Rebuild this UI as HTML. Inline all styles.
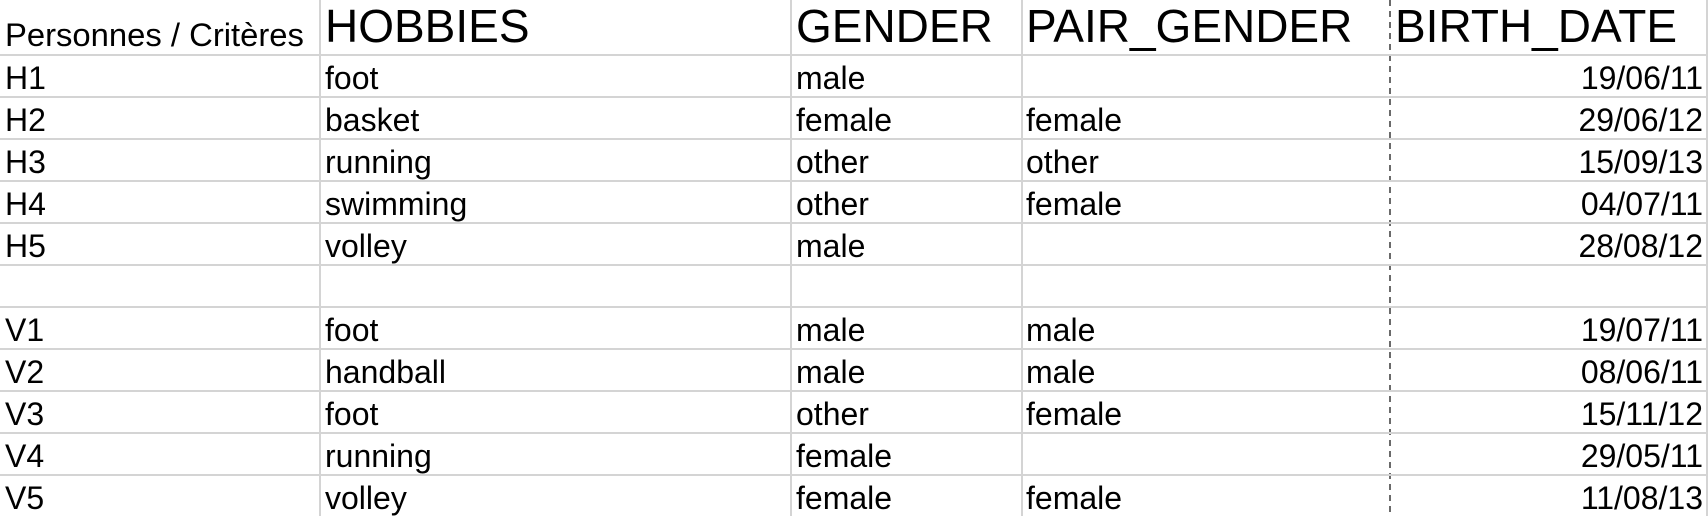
<!DOCTYPE html>
<html><head><meta charset="utf-8"><style>
html,body{margin:0;padding:0;background:#fff;width:1708px;height:516px;overflow:hidden}
body{position:relative;font-family:"Liberation Sans",sans-serif;color:#000}
.h{position:absolute;left:0;width:1708px;height:2px;background:#d4d4d4}
.v{position:absolute;top:0;width:2px;height:516px;background:#d4d4d4}
.d{position:absolute;top:0;left:1389px;width:2px;height:516px;background:repeating-linear-gradient(to bottom,#6a6a6a 0 6px,transparent 6px 11px)}
.t{position:absolute;font-size:32px;line-height:32px;white-space:nowrap}
.r{text-align:right;right:5px}
.hd{position:absolute;font-size:46px;line-height:46px;white-space:nowrap}
</style></head><body>
<div class="v" style="left:319px"></div>
<div class="v" style="left:790px"></div>
<div class="v" style="left:1021px"></div>
<div class="d"></div>
<div class="v" style="left:1706px"></div>

<div class="t" style="left:5px;top:19px;font-size:32.8px;line-height:32px">Personnes / Critères</div>
<div class="hd" style="left:325px;top:3px">HOBBIES</div>
<div class="hd" style="left:796px;top:3px">GENDER</div>
<div class="hd" style="left:1026px;top:3px">PAIR_GENDER</div>
<div class="hd" style="left:1395px;top:3px">BIRTH_DATE</div>

<div id="rows"></div>
<script>
var data=[["H1","foot","male","","19/06/11"],["H2","basket","female","female","29/06/12"],["H3","running","other","other","15/09/13"],["H4","swimming","other","female","04/07/11"],["H5","volley","male","","28/08/12"],["","","","",""],["V1","foot","male","male","19/07/11"],["V2","handball","male","male","08/06/11"],["V3","foot","other","female","15/11/12"],["V4","running","female","","29/05/11"],["V5","volley","female","female","11/08/13"]];
var xs=[5,325,796,1026];var h="";
for(var i=0;i<=11;i++){h+='<div class="h" style="top:'+(54+i*42)+'px"></div>';}
data.forEach(function(r,i){var top=56+i*42+6;
for(var j=0;j<4;j++)if(r[j])h+='<div class="t" style="left:'+xs[j]+'px;top:'+top+'px">'+r[j]+'</div>';
if(r[4])h+='<div class="t r" style="top:'+top+'px">'+r[4]+'</div>';});
document.getElementById("rows").innerHTML=h;
</script>
</body></html>
